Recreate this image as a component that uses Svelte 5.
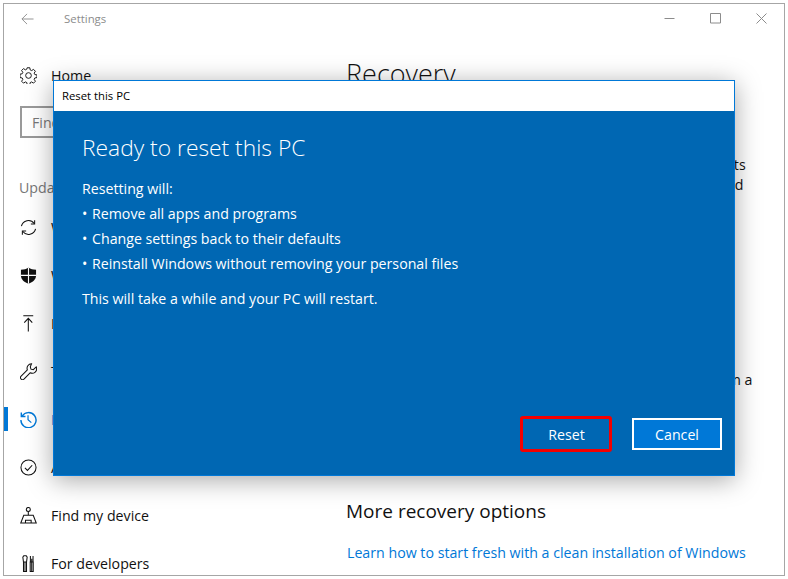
<script>
  const navItems = [
    { label: "Windows Update", icon: "sync" },
    { label: "Windows Defender", icon: "shield" },
    { label: "Backup", icon: "backup" },
    { label: "Troubleshoot", icon: "wrench" },
    { label: "Recovery", icon: "history", active: true },
    { label: "Activation", icon: "check" },
    { label: "Find my device", icon: "device" },
    { label: "For developers", icon: "dev" }
  ];

  const resetItems = [
    "Remove all apps and programs",
    "Change settings back to their defaults",
    "Reinstall Windows without removing your personal files"
  ];
</script>

{#snippet navIcon(name)}
  <svg class="icon" viewBox="0 0 18 18" fill="none" stroke="currentColor" stroke-width="1.1">
    {#if name === "sync"}
      <path d="M1.500 7.600A7.600 7.600 0 0 1 15 4.800" />
      <path d="M16.500 10.400A7.600 7.600 0 0 1 3 13.200" />
      <path d="M15.500 1.200v4h-4" />
      <path d="M2.500 16.800v-4h4" />
    {:else if name === "shield"}
      <path fill="currentColor" stroke="none" d="M9 .6c2 1.500 5 2.300 8 2.400v6c0 4-3.200 7-8 8.800-4.800-1.800-8-4.800-8-8.800V3c3-.1 6-.9 8-2.400z" />
      <path stroke="#fff" stroke-width="1.200" d="M9 .6v17.200M1 8.800h16" />
    {:else if name === "backup"}
      <path d="M3.500 .8h10.500M8.800 17.500V3.500M4.500 8 8.800 3.500 13 8" />
    {:else if name === "wrench"}
      <path d="M12.200 .8a4.800 4.800 0 0 0-4.400 6.500L1.200 14a2.100 2.100 0 0 0 3 3l6.500-6.600a4.800 4.800 0 0 0 6.500-6.200l-3.100 2.900-2.500-.6-.7-2.500z" />
    {:else if name === "history"}
      <path stroke-width="1.500" d="M2.300 5.300A8 8 0 1 1 1 9.500" />
      <path stroke-width="1.500" d="M1.400 1.500v4.400h4.400" />
      <path stroke-width="1.300" d="M8.500 4.500v4.800l3.500 3" />
    {:else if name === "check"}
      <circle cx="9" cy="9" r="8" />
      <path d="m5.200 9.500 2.700 2.600 5-5.500" />
    {:else if name === "device"}
      <circle cx="8.800" cy="2.600" r="2.100" />
      <path d="M8.800 4.700v4M.8 17h16.400l-3.200-8.300H4L.8 17zM5.800 17v-3h6v3" />
    {:else if name === "dev"}
      <path d="M3.700 7.500v10h3.200v-10M3.700 7.500 3 2.200 4 .8h2.600l1 1.400-.7 5.300H3.700zM5.300 7.500v10M10.800 7.500v10H14v-10h-3.200zM12.400 7.500v10M11 7.500V1M13.800 7.500V1M12.400 4v3.500" />
    {/if}
  </svg>
{/snippet}

<div class="window">
  <header class="titlebar">
    <svg class="back" viewBox="0 0 14 12" fill="none" stroke="currentColor" stroke-width="1">
      <path d="M13.500 6H1M6.500 .5 1 6l5.500 5.500" />
    </svg>
    <span class="app-name">Settings</span>
    <div class="controls">
      <svg viewBox="0 0 11 11" fill="none" stroke="currentColor"><path d="M.5 5.500h10" /></svg>
      <svg viewBox="0 0 11 11" fill="none" stroke="currentColor"><path d="M.5 .5h10v9.500H.5z" /></svg>
      <svg viewBox="0 0 11 11" fill="none" stroke="currentColor"><path d="m.5 .5 10 10M10.500 .5l-10 10" /></svg>
    </div>
  </header>

  <div class="content">
    <nav class="sidebar">
      <div class="nav-row home">
        <svg class="icon" viewBox="0 0 18 18" fill="none" stroke="currentColor" stroke-width="1">
          <circle cx="9" cy="9" r="3" />
          <path d="M7.600 .8h2.800l.4 2.300 1.500.7 2-1.300 2 2-1.300 2 .7 1.500 2.300.4v2.800l-2.300.4-.7 1.500 1.300 2-2 2-2-1.300-1.500.7-.4 2.300H7.600l-.4-2.300-1.500-.7-2 1.300-2-2 1.300-2-.7-1.500-2.300-.4V7.600l2.300-.4.7-1.500-1.300-2 2-2 2 1.300 1.500-.7z" />
        </svg>
        <span>Home</span>
      </div>
      <div class="search">Find a setting</div>
      <h3>Update &amp; Security</h3>
      {#each navItems as item}
        <div class="nav-row" class:active={item.active}>
          {@render navIcon(item.icon)}
          <span>{item.label}</span>
        </div>
      {/each}
    </nav>

    <main class="page">
      <h1>Recovery</h1>
      <h2 class="reset-head">Reset this PC</h2>
      <p>If your PC isn't working right, resetting it might help. This lets<br />you choose to keep your personal files or remove them, and<br />then reinstalls Windows.</p>
      <h2 class="startup-head">Advanced startup</h2>
      <p>Start up from a device or disc, such as a USB drive or a key<br />change your PC firmware settings, or restore Windows from a<br />system image.</p>
      <h2 class="more-head">More recovery options</h2>
      <a href="#learn">Learn how to start fresh with a clean installation of Windows</a>
    </main>
  </div>
</div>

<section class="dialog">
  <div class="dialog-title">Reset this PC</div>
  <div class="dialog-body">
    <h2>Ready to reset this PC</h2>
    <p class="lead">Resetting will:</p>
    <ul>
      {#each resetItems as line}
        <li>{line}</li>
      {/each}
    </ul>
    <p class="note">This will take a while and your PC will restart.</p>
    <div class="actions">
      <button class="reset">Reset</button>
      <button class="cancel">Cancel</button>
    </div>
  </div>
</section>

<style>
  :global(body) {
    background: #fff;
    font-family: "Open Sans", "Noto Sans", sans-serif;
    color: #111;
  }

  .window {
    box-sizing: border-box;
    margin: 3px 3px 0;
    height: 573px;
    background: #fff;
    border: 1px solid #a6a6a6;
    overflow: hidden;
    display: flex;
    flex-direction: column;
  }

  .titlebar {
    flex: none;
    height: 29px;
    display: flex;
    align-items: center;
    padding-left: 17px;
    color: #8c8c8c;
  }

  .back {
    width: 13px;
    height: 12px;
  }

  .app-name {
    margin-left: 30px;
    font-size: 11.4px;
  }

  .controls {
    margin-left: auto;
    display: flex;
    gap: 35px;
    padding-right: 17px;
  }

  .controls svg {
    width: 11px;
    height: 11px;
  }

  .content {
    flex: 1;
    display: flex;
    min-height: 0;
  }

  .sidebar {
    flex: none;
    width: 342px;
    font-size: 14.2px;
  }

  .nav-row {
    position: relative;
    height: 48px;
    display: flex;
    align-items: center;
    padding-left: 16px;
    gap: 14px;
  }

  .nav-row.home {
    margin-top: 18px;
  }

  .nav-row.active {
    color: #0078d7;
  }

  .nav-row.active::before {
    content: "";
    position: absolute;
    left: 0;
    top: 12px;
    width: 4px;
    height: 24px;
    background: #0078d7;
  }

  .icon {
    flex: none;
    width: 17px;
    height: 17px;
  }

  .search {
    box-sizing: border-box;
    margin: 7px 0 0 16px;
    width: 303px;
    height: 32px;
    padding: 0 10px;
    display: flex;
    align-items: center;
    border: 2px solid #999;
    font-size: 14.2px;
    color: #777;
  }

  h3 {
    margin: 33px 0 0 15px;
    height: 32px;
    line-height: 34px;
    font-size: 14.2px;
    font-weight: 400;
    color: #777;
  }

  .page {
    flex: 1;
    font-size: 14.2px;
    line-height: 20px;
    white-space: nowrap;
  }

  h1 {
    margin: 21px 0 0;
    font-size: 27px;
    line-height: 40px;
    font-weight: 300;
  }

  .page h2 {
    margin: 0;
    font-size: 19px;
    line-height: 28px;
    font-weight: 400;
  }

  .page p {
    margin: 0;
  }

  .page h2.reset-head {
    margin-top: 20px;
    margin-bottom: 13px;
  }

  .page h2.startup-head {
    margin-top: 92px;
    margin-bottom: 15px;
  }

  .page h2.more-head {
    margin-top: 87px;
    margin-bottom: 18px;
  }

  a {
    margin-left: 1px;
    color: #0078d7;
    text-decoration: none;
  }

  .dialog {
    position: absolute;
    left: 53px;
    top: 80px;
    box-sizing: border-box;
    width: 682px;
    height: 396px;
    border: 1px solid #0078d7;
    box-shadow: 0 4px 24px rgba(0, 0, 0, 0.35);
    display: flex;
    flex-direction: column;
  }

  .dialog-title {
    flex: none;
    box-sizing: border-box;
    height: 30px;
    display: flex;
    align-items: center;
    padding: 0 0 2px 8px;
    background: #fff;
    color: #000;
    font-size: 11.3px;
  }

  .dialog-body {
    flex: 1;
    display: flex;
    flex-direction: column;
    padding: 0 12px 23px 28px;
    background: #0067b3;
    color: #fff;
    font-size: 14.2px;
    line-height: 25px;
  }

  .dialog-body h2 {
    margin: 20px 0 11px;
    font-size: 22.8px;
    line-height: 34px;
    font-weight: 300;
  }

  .dialog-body p {
    margin: 0;
  }

  ul {
    margin: 0;
    padding: 0;
    list-style: none;
  }

  li::before {
    content: "•";
    display: inline-block;
    width: 10px;
  }

  .note {
    margin-top: 10px !important;
  }

  .actions {
    margin-top: auto;
    display: flex;
    justify-content: flex-end;
    align-items: center;
    gap: 20px;
  }

  button {
    box-sizing: border-box;
    width: 90px;
    font: inherit;
    color: #fff;
    padding: 0;
  }

  .reset {
    width: 92px;
    height: 36px;
    padding-left: 1px;
    background: #0067b3;
    border: 3px solid #f40000;
    border-radius: 3px;
  }

  .cancel {
    height: 32px;
    background: #0078d7;
    border: 2px solid #fff;
  }
</style>
